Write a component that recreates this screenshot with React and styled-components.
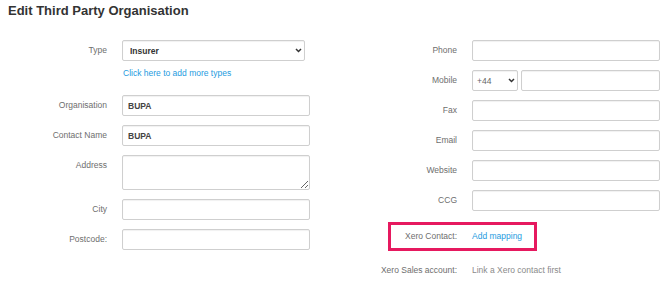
import React from "react";
import styled, { createGlobalStyle } from "styled-components";

const GlobalStyle = createGlobalStyle`
    body {
        margin: 0;
        background: #fff;
        font-family: "Liberation Sans", Arial, sans-serif;
    }
`;

const Chevron = () => (
    <svg width="7" height="5" viewBox="0 0 7 5">
        <path d="M1 1l2.5 2.5L6 1" fill="none" stroke="#333" strokeWidth="1.5" />
    </svg>
);

const App = () => {
    return (
        <Page>
            <GlobalStyle />
            <Title>Edit Third Party Organisation</Title>
            <Columns>
                <Column $width="310px">
                    <Row $labelWidth="107px">
                        <Label>Type</Label>
                        <Field>
                            <SelectWrap $width="183px">
                                <Select $bold defaultValue="Insurer">
                                    <option>Insurer</option>
                                </Select>
                                <Arrow $right="3px">
                                    <Chevron />
                                </Arrow>
                            </SelectWrap>
                            <HelpLink href="#">Click here to add more types</HelpLink>
                        </Field>
                    </Row>
                    <Row $labelWidth="107px">
                        <Label>Organisation</Label>
                        <Input defaultValue="BUPA" />
                    </Row>
                    <Row $labelWidth="107px">
                        <Label>Contact Name</Label>
                        <Input defaultValue="BUPA" />
                    </Row>
                    <Row $labelWidth="107px">
                        <Label>Address</Label>
                        <TextArea />
                    </Row>
                    <Row $labelWidth="107px">
                        <Label>City</Label>
                        <Input />
                    </Row>
                    <Row $labelWidth="107px">
                        <Label>Postcode:</Label>
                        <Input />
                    </Row>
                </Column>

                <Column $width="290px" $offset="70px">
                    <Row $labelWidth="77px">
                        <Label>Phone</Label>
                        <Input />
                    </Row>
                    <Row $labelWidth="77px">
                        <Label>Mobile</Label>
                        <PhoneGroup>
                            <SelectWrap $width="46px">
                                <Select $compact defaultValue="+44">
                                    <option>+44</option>
                                </Select>
                                <Arrow $right="3px">
                                    <Chevron />
                                </Arrow>
                            </SelectWrap>
                            <Input $width="139px" />
                        </PhoneGroup>
                    </Row>
                    <Row $labelWidth="77px">
                        <Label>Fax</Label>
                        <Input />
                    </Row>
                    <Row $labelWidth="77px">
                        <Label>Email</Label>
                        <Input />
                    </Row>
                    <Row $labelWidth="77px">
                        <Label>Website</Label>
                        <Input />
                    </Row>
                    <Row $labelWidth="77px">
                        <Label>CCG</Label>
                        <Input />
                    </Row>
                    <Highlight>
                        <Label $width="66px">Xero Contact:</Label>
                        <PlainLink href="#">Add mapping</PlainLink>
                    </Highlight>
                    <Row $labelWidth="77px">
                        <Label>Xero Sales account:</Label>
                        <Note>Link a Xero contact first</Note>
                    </Row>
                </Column>
            </Columns>
        </Page>
    );
};

const Page = styled.div`
    width: 670px;
    height: 287px;
    overflow: hidden;
    font-size: 8.5px;
`;

const Title = styled.h1`
    margin: 0;
    padding: 3px 0 0 8px;
    font-size: 13px;
    line-height: 15px;
    font-weight: bold;
    color: #333;
`;

const Columns = styled.div`
    display: flex;
    padding-top: 22px;
`;

const Column = styled.div`
    display: flex;
    flex-direction: column;
    gap: 9px;
    width: ${(p) => p.$width};
    margin-left: ${(p) => p.$offset || "0"};
`;

const Row = styled.div`
    display: flex;
    align-items: flex-start;
    gap: 15px;
    & > label:first-child {
        width: ${(p) => p.$labelWidth};
    }
`;

const Label = styled.label`
    flex-shrink: 0;
    width: ${(p) => p.$width || "auto"};
    text-align: right;
    line-height: 21px;
    color: #6e6e6e;
    white-space: nowrap;
`;

const Field = styled.div`
    display: flex;
    flex-direction: column;
`;

const fieldBase = `
    box-sizing: border-box;
    border: 1px solid #cfcfcf;
    border-radius: 2px;
    box-shadow: inset 0 1px 1px rgba(0, 0, 0, 0.06);
    background: #fff;
    font-family: "Liberation Sans", Arial, sans-serif;
    font-size: 8.5px;
    color: #444;
    outline: none;
`;

const Input = styled.input`
    ${fieldBase}
    width: ${(p) => p.$width || "188px"};
    height: 21px;
    padding: 0 5px;
    font-weight: bold;
`;

const TextArea = styled.textarea`
    ${fieldBase}
    width: 188px;
    height: 35px;
    padding: 4px 5px;
    resize: vertical;
    display: block;
    margin: 0;
`;

const SelectWrap = styled.div`
    position: relative;
    width: ${(p) => p.$width};
    height: 21px;
`;

const Select = styled.select`
    ${fieldBase}
    appearance: none;
    width: 100%;
    height: 21px;
    padding: 0 0 0 ${(p) => (p.$compact ? "4px" : "7px")};
    font-weight: ${(p) => (p.$bold ? "bold" : "normal")};
    color: ${(p) => (p.$compact ? "#666" : "#333")};
`;

const Arrow = styled.span`
    position: absolute;
    right: ${(p) => p.$right};
    top: 8px;
    display: flex;
    pointer-events: none;
`;

const PhoneGroup = styled.div`
    display: flex;
    gap: 3px;
`;

const HelpLink = styled.a`
    margin: 6px 0 7px 1px;
    line-height: 12px;
    color: #1e9be0;
    text-decoration: none;
`;

const PlainLink = styled.a`
    line-height: 21px;
    color: #1e9be0;
    text-decoration: none;
    white-space: nowrap;
`;

const Highlight = styled.div`
    align-self: flex-start;
    display: flex;
    gap: 15px;
    margin: 2px 0 0 8px;
    padding: 1px 12px 1px 0;
    border: 3px solid #e6195f;
    width: 149px;
    box-sizing: border-box;
`;

const Note = styled.span`
    line-height: 21px;
    color: #8a8a8a;
    white-space: nowrap;
`;

export default App;
